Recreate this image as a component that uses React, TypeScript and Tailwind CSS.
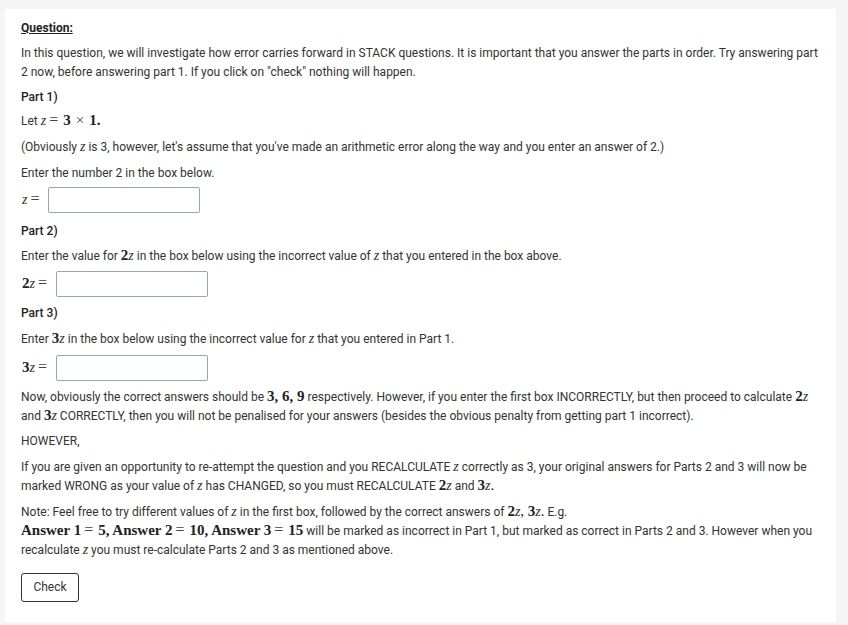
import React from "react";

function M({ children }: { children: React.ReactNode }) {
  return (
    <span className="font-['Liberation_Serif',serif] text-[15px] leading-[0] text-[#222]">{children}</span>
  );
}

function Eq() {
  return (
    <span className="font-['Liberation_Serif',serif] text-[16px] leading-[0] text-[#444] ml-[3px] mr-[5px]">=</span>
  );
}

function Times() {
  return (
    <span className="font-['Liberation_Serif',serif] text-[15px] leading-[0] text-[#444] mx-[5px]">×</span>
  );
}

function Zi() {
  return <span className="font-['Liberation_Serif',serif] italic text-[14px] leading-[0] text-[#333]">z</span>;
}

function Num({ children }: { children: React.ReactNode }) {
  return <span className="font-['Liberation_Serif',serif] font-bold text-[15px] leading-[0] text-[#222]">{children}</span>;
}

function InputRow({ label, cls }: { label: React.ReactNode; cls: string }) {
  return (
    <div className={`flex items-center h-[26px] ${cls}`}>
      <span className="whitespace-nowrap leading-[19px] pl-[1px]">{label}</span>
      <div className="ml-[4px] w-[152px] h-[26px] border border-[#9aa5ad] rounded-[2px] bg-white" />
    </div>
  );
}

export default function App() {
  return (
    <div className="min-h-[625px] bg-[#f5f5f5] pt-[9px] pl-[5px] pr-[12px] pb-[3px] font-['Roboto',sans-serif] text-[12px] leading-[19px] text-[#333]">
      <div className="bg-white w-[831px] h-[613px] pl-[16px] pr-[15px] pt-[10px]">
        <p className="font-bold underline mb-[6px] text-[#222]">Question:</p>
        <p className="mb-[6px]">
          In this question, we will investigate how error carries forward in STACK questions. It is important that you answer the parts in order. Try answering part 2 now, before answering part 1. If you click on "check" nothing will happen.
        </p>
        <p className="font-medium mb-[5px] text-[#222]">Part 1)</p>
        <p className="mb-[7px]">
          Let <Zi /><Eq /><Num>3</Num><Times /><Num>1.</Num>
        </p>
        <p className="mb-[7px]">
          (Obviously <Zi /> is 3, however, let's assume that you've made an arithmetic error along the way and you enter an answer of 2.)
        </p>
        <p className="mb-[7px]">Enter the number 2 in the box below.</p>
        <InputRow label={<><Zi /><Eq /></>} cls="mt-[-3px] mb-[9px]" />
        <p className="font-medium mb-[6px] text-[#222]">Part 2)</p>
        <p className="mb-[6px]">
          Enter the value for <Num>2</Num><Zi /> in the box below using the incorrect value of <Zi /> that you entered in the box above.
        </p>
        <InputRow label={<><Num>2</Num><Zi /><Eq /></>} cls="mt-[-1px] mb-[7px]" />
        <p className="font-medium mb-[7px] text-[#222]">Part 3)</p>
        <p className="mb-[7px]">
          Enter <Num>3</Num><Zi /> in the box below using the incorrect value for <Zi /> that you entered in Part 1.
        </p>
        <InputRow label={<><Num>3</Num><Zi /><Eq /></>} cls="mt-[-1px] mb-[7px]" />
        <p className="mb-[6px]">
          Now, obviously the correct answers should be <Num>3, 6, 9</Num> respectively. However, if you enter the first box INCORRECTLY, but then proceed to calculate <Num>2</Num><Zi /> and <Num>3</Num><Zi /> CORRECTLY, then you will not be penalised for your answers (besides the obvious penalty from getting part 1 incorrect).
        </p>
        <p className="mb-[7px]">HOWEVER,</p>
        <p className="mb-[7px]">
          If you are given an opportunity to re-attempt the question and you RECALCULATE <Zi /> correctly as 3, your original answers for Parts 2 and 3 will now be marked WRONG as your value of <Zi /> has CHANGED, so you must RECALCULATE <Num>2</Num><Zi /> and <Num>3</Num><Zi /><M>.</M>
        </p>
        <p className="mb-[13px]">
          Note: Feel free to try different values of <Zi /> in the first box, followed by the correct answers of <Num>2</Num><Zi /><M>, </M><Num>3</Num><Zi /><M>.</M> E.g.
          <br />
          <Num>Answer 1</Num><Eq /><Num>5, Answer 2</Num><Eq /><Num>10, Answer 3</Num><Eq /><Num>15</Num> will be marked as incorrect in Part 1, but marked as correct in Parts 2 and 3. However when you recalculate <Zi /> you must re-calculate Parts 2 and 3 as mentioned above.
        </p>
        <button className="w-[58px] h-[29px] border border-[#333] rounded-[3px] bg-white text-[12px] text-[#333]">
          Check
        </button>
      </div>
    </div>
  );
}
